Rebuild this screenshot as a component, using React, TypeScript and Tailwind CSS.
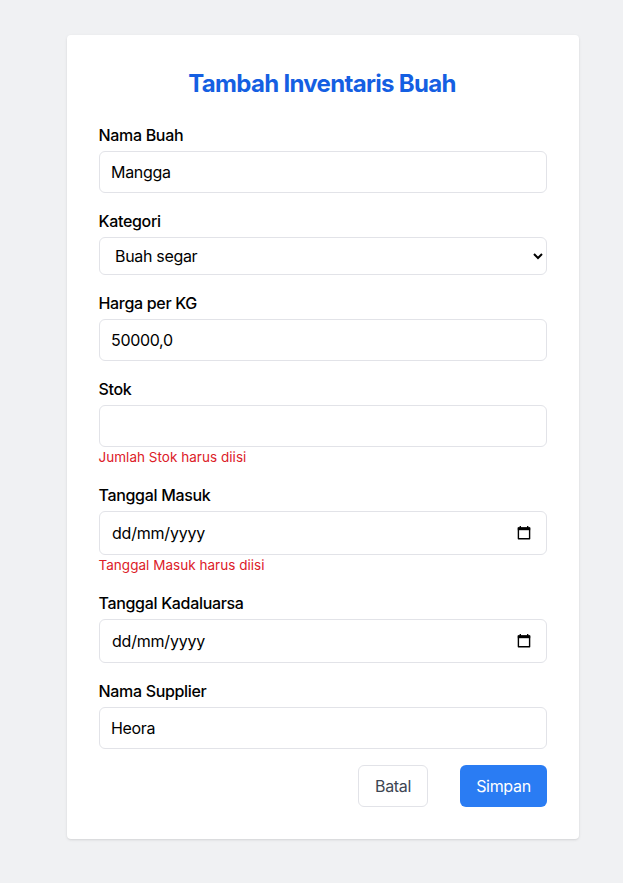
import React from "react";

const box =
  "w-full rounded-md border border-[#e2e3e8] bg-white text-black outline-none";

function Field({ label, error, children }: { label: string; error?: string; children: React.ReactNode }) {
  return (
    <div className="mb-4">
      <label className="-ml-[0.5px] mb-1 block h-6 leading-6 font-medium tracking-[-0.32px] text-black">{label}</label>
      {children}
      {error && <p className="-ml-[0.5px] h-5 text-[13.5px] leading-5 tracking-[0.03px] text-[#dc2028]">{error}</p>}
    </div>
  );
}

function TextBox({ value }: { value: string }) {
  return <input type="text" defaultValue={value} className={box + " block h-[42px] pr-3 pl-[11px] tracking-[-0.32px]"} />;
}

function DateBox() {
  return (
    <div className={box + " flex h-11 items-center justify-between px-3"}>
      <span className="tracking-[-0.21px]">dd/mm/yyyy</span>
      <svg className="mr-[3px]" width="14" height="16" viewBox="0 0 14 16" fill="none">
        <path d="M1.4 3H12.6V13.8H1.4Z" stroke="black" strokeWidth="1.4" strokeLinejoin="round" />
        <path d="M0.8 2.5H13.2V5.2H0.8Z" fill="black" />
        <path d="M3.3 1V3M10.7 1V3" stroke="black" strokeWidth="1.3" />
      </svg>
    </div>
  );
}

export default function App() {
  return (
    <div className="h-[883px] w-[623px] bg-[#f0f1f3] pt-[35px] pl-[67px] font-['Inter',sans-serif] text-[16px] leading-6 tracking-[-0.32px]">
      <div className="h-[804px] w-[512px] rounded bg-white p-8 shadow-sm">
        <h1 className="mb-[23px] h-[33px] pt-px pr-[2px] text-center text-[24px] leading-8 font-bold tracking-[-0.68px] text-[#155fe2]">
          Tambah Inventaris Buah
        </h1>
        <Field label="Nama Buah"><TextBox value="Mangga" /></Field>
        <Field label="Kategori">
          <select className={box + " block h-[38px] pr-0 pl-[11px] tracking-[-0.32px]"} defaultValue="segar">
            <option value="segar">Buah segar</option>
          </select>
        </Field>
        <Field label="Harga per KG"><TextBox value="50000,0" /></Field>
        <Field label="Stok" error="Jumlah Stok harus diisi"><TextBox value="" /></Field>
        <Field label="Tanggal Masuk" error="Tanggal Masuk harus diisi"><DateBox /></Field>
        <Field label="Tanggal Kadaluarsa"><DateBox /></Field>
        <Field label="Nama Supplier"><TextBox value="Heora" /></Field>
        <div className="flex justify-end gap-8">
          <button className="h-[42px] w-[70px] rounded-md border border-[#e2e3e8] text-[#3d4653]">Batal</button>
          <button className="h-[42px] w-[87px] rounded-md bg-[#2a7cf3] text-white">Simpan</button>
        </div>
      </div>
    </div>
  );
}
